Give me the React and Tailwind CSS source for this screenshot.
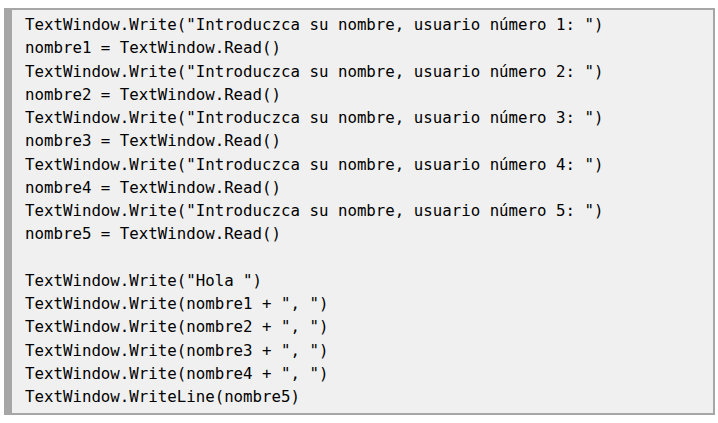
import React from "react";

const lines = [
  'TextWindow.Write("Introduczca su nombre, usuario número 1: ")',
  "nombre1 = TextWindow.Read()",
  'TextWindow.Write("Introduczca su nombre, usuario número 2: ")',
  "nombre2 = TextWindow.Read()",
  'TextWindow.Write("Introduczca su nombre, usuario número 3: ")',
  "nombre3 = TextWindow.Read()",
  'TextWindow.Write("Introduczca su nombre, usuario número 4: ")',
  "nombre4 = TextWindow.Read()",
  'TextWindow.Write("Introduczca su nombre, usuario número 5: ")',
  "nombre5 = TextWindow.Read()",
  "",
  'TextWindow.Write("Hola ")',
  'TextWindow.Write(nombre1 + ", ")',
  'TextWindow.Write(nombre2 + ", ")',
  'TextWindow.Write(nombre3 + ", ")',
  'TextWindow.Write(nombre4 + ", ")',
  "TextWindow.WriteLine(nombre5)",
];

export default function App() {
  return (
    <div className="w-[718px] h-[423px] bg-white pt-[8px] pl-[4px]">
      <pre
        className="w-[711px] h-[407px] m-0 bg-[#f0f0f0] border-t-2 border-r-2 border-b-2 border-l-[8px] border-[#a6a6a6] pl-[13px] pt-[3px] text-[15.75px] leading-[23.25px] text-black overflow-hidden"
        style={{ fontFamily: '"DejaVu Sans Mono", "Liberation Mono", monospace' }}
      >
        {lines.map((l, i) => (
          <div key={i} className="h-[23.25px]">{l}</div>
        ))}
      </pre>
    </div>
  );
}
